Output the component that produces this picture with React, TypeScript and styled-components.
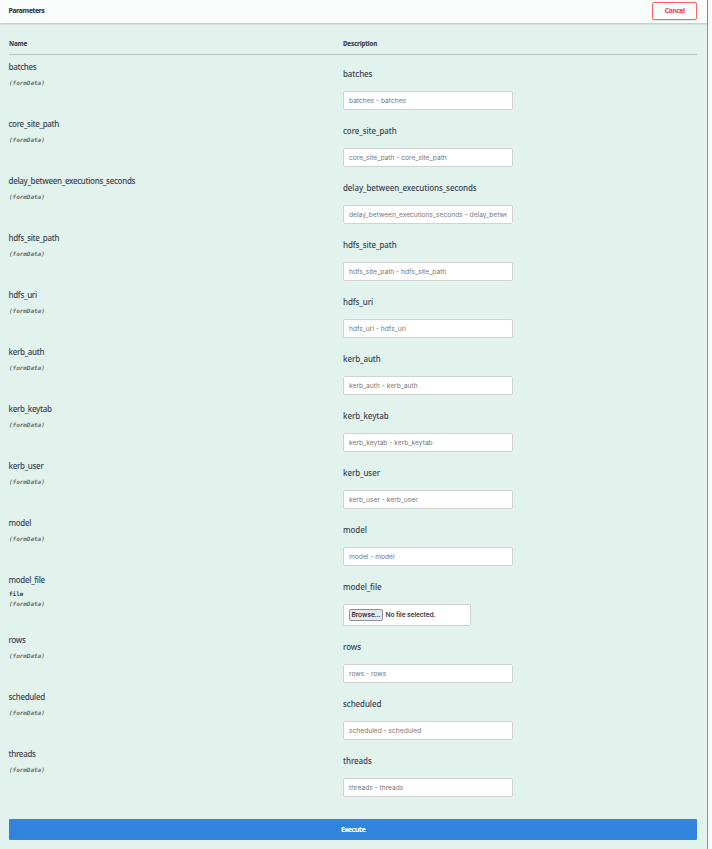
import React from "react";
import styled, { createGlobalStyle } from "styled-components";

const GlobalStyle = createGlobalStyle`
  *, *::before, *::after { box-sizing: border-box; }
  body { margin: 0; background: #fafafa; overflow: hidden; }
`;

const Panel = styled.main`
  width: 708px;
  height: 849px;
  background: #e2f3ed;
  border-right: 1px solid #3fb68b;
  color: #3b4151;
  font-family: "Noto Sans", "Open Sans", sans-serif;
`;

const SectionHeader = styled.header`
  display: flex;
  align-items: center;
  justify-content: space-between;
  height: 23px;
  padding: 0 10px 3px 8.5px;
  background: #f9fdfc;
  box-shadow: 0 1px 2px rgba(0, 0, 0, 0.2);
`;

const SectionTitle = styled.h4`
  margin: 2px 0 0;
  font-size: 7px;
  line-height: 10px;
  font-weight: 800;
  letter-spacing: -0.55px;
`;

const CancelButton = styled.button`
  width: 45px;
  height: 18px;
  margin-top: 1px;
  padding: 0;
  border: 1px solid #ff6060;
  border-radius: 2px;
  background: transparent;
  box-shadow: 0 1px 1px rgba(0, 0, 0, 0.1);
  color: #ff5050;
  font: 800 7px/14px "Noto Sans", sans-serif;
  letter-spacing: -0.6px;
`;

const Parameters = styled.section`
  padding: 15px 10px 0 9px;
`;

const Row = styled.div<{ $height?: number }>`
  display: grid;
  grid-template-columns: 334px 1fr;
  height: ${({ $height }) => $height ?? 57}px;
`;

const HeadRow = styled(Row)`
  height: 17px;
  border-bottom: 1px solid #b5c6c3;
  font-size: 6.2px;
  line-height: 11px;
  font-weight: 800;
  letter-spacing: -0.17px;
`;

const NameCell = styled.div`
  display: flex;
  flex-direction: column;
  padding-top: 6px;
`;

const Name = styled.div`
  height: 13px;
  margin-left: -0.5px;
  font-size: 8px;
  line-height: 11px;
  font-weight: 500;
  letter-spacing: -0.31px;
`;

const FileType = styled.div`
  height: 10px;
  margin-top: 2px;
  font: 700 6px/10px "DejaVu Sans Mono", monospace;
`;

const Location = styled.div<{ $compact?: boolean }>`
  margin-top: ${({ $compact }) => ($compact ? 0 : 4)}px;
  color: #69716f;
  font: italic 700 6px/10px "DejaVu Sans Mono", monospace;
  letter-spacing: -0.04px;
`;

const DescriptionCell = styled.div`
  padding-top: 13px;
`;

const Description = styled.div`
  height: 23px;
  font-size: 8px;
  line-height: 12px;
  font-weight: 500;
  letter-spacing: -0.09px;
`;

const TextInput = styled.input`
  display: block;
  width: 170px;
  height: 19px;
  padding: 0 5px;
  border: 1px solid #d0d3d1;
  border-radius: 2px;
  outline: 0;
  background: #fff;
  font: 400 6.67px/10px Inter, sans-serif;
  &::placeholder { color: #777; opacity: 1; }
`;

const FileField = styled.div`
  display: flex;
  align-items: center;
  gap: 2.5px;
  width: 128px;
  height: 22px;
  padding: 0 5px;
  border: 1px solid #d0d3d1;
  border-radius: 2px;
  background: #fff;
  font: 600 6.67px/10px Inter, sans-serif;
  letter-spacing: -0.12px;
`;

const BrowseButton = styled.button`
  width: 34px;
  height: 12px;
  padding: 0;
  border: 1px solid #8f8f9d;
  border-radius: 2px;
  background: #e9e9ed;
  color: #111;
  font: 500 6.67px/9px Inter, sans-serif;
  letter-spacing: -0.08px;
`;

const ExecuteButton = styled.button`
  display: block;
  width: 688px;
  height: 21px;
  margin-top: 20px;
  padding: 0;
  border: 0;
  border-radius: 1px;
  background: #3084db;
  color: #fff;
  font: 800 7px/19px "Noto Sans", sans-serif;
  letter-spacing: -0.52px;
`;

const parameters = [
  "batches", "core_site_path", "delay_between_executions_seconds",
  "hdfs_site_path", "hdfs_uri", "kerb_auth", "kerb_keytab", "kerb_user",
  "model", "model_file", "rows", "scheduled", "threads",
];

function ParameterRow({ name }: { name: string }) {
  const isFile = name === "model_file";
  return (
    <Row $height={isFile ? 60 : 57}>
      <NameCell>
        <Name>{name}</Name>
        {isFile && <FileType>file</FileType>}
        <Location $compact={isFile}>(formData)</Location>
      </NameCell>
      <DescriptionCell>
        <Description>{name}</Description>
        {isFile ? (
          <FileField>
            <BrowseButton type="button">Browse...</BrowseButton>
            <span>No file selected.</span>
          </FileField>
        ) : (
          <TextInput placeholder={`${name} - ${name}`} />
        )}
      </DescriptionCell>
    </Row>
  );
}

export default function App() {
  return (
    <>
      <GlobalStyle />
      <Panel>
        <SectionHeader>
          <SectionTitle>Parameters</SectionTitle>
          <CancelButton type="button">Cancel</CancelButton>
        </SectionHeader>
        <Parameters>
          <HeadRow><span>Name</span><span>Description</span></HeadRow>
          {parameters.map((name) => <ParameterRow key={name} name={name} />)}
          <ExecuteButton type="button">Execute</ExecuteButton>
        </Parameters>
      </Panel>
    </>
  );
}
